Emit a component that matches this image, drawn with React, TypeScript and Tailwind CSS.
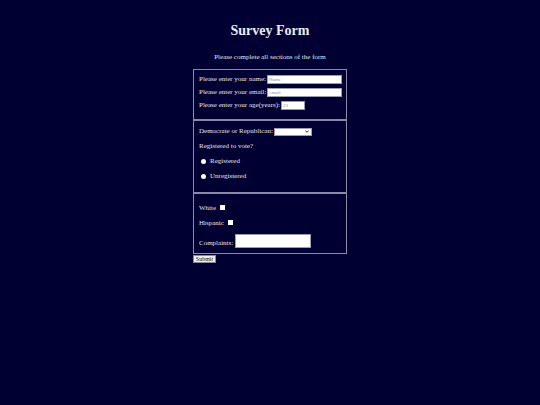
import React from 'react'

const serif = { fontFamily: '"Liberation Serif", "Times New Roman", serif' }

const Field = ({ placeholder, w }: { placeholder: string; w: string }) => (
  <input
    type="text"
    placeholder={placeholder}
    className={`${w} shrink-0 h-[9px] bg-white border border-[#9a9ab0] px-[1px] text-[5px] leading-none text-[#333] placeholder:text-[#8a8a8a] outline-none`}
  />
)

const Radio = ({ label }: { label: string }) => (
  <div className="h-[15px] flex items-center pl-[2px]">
    <span className="w-[5px] h-[5px] rounded-full bg-white mr-[4px]" />
    <span>{label}</span>
  </div>
)

const Check = ({ label }: { label: string }) => (
  <div className="h-[15px] flex items-center">
    <span>{label}</span>
    <span className="w-[5px] h-[5px] bg-white ml-[4px] -mt-[2px]" />
  </div>
)

export default function App() {
  return (
    <div className="w-[540px] h-[405px] bg-[#000033] text-[#e4e4ee] overflow-hidden whitespace-nowrap" style={serif}>
      <h1 className="pt-[22px] text-center text-[14px] font-bold leading-[18px] text-[#ececf4]">Survey Form</h1>
      <p className="mt-[12px] text-center text-[7px] leading-[10px]">Please complete all sections of the form</p>

      <form className="w-[154px] mx-auto mt-[7px] text-[7px] leading-none">
        {/* personal */}
        <div className="border border-[#8a8aa8] pt-[3px] pb-[7px] px-[5px]">
          <div className="h-[13px] flex items-center gap-[1px]">
            <span className="shrink-0">Please enter your name:</span>
            <Field placeholder="Name" w="w-[75px]" />
          </div>
          <div className="h-[13px] flex items-center gap-[1px]">
            <span className="shrink-0">Please enter your email:</span>
            <Field placeholder="email" w="w-[75px]" />
          </div>
          <div className="h-[13px] flex items-center gap-[1px]">
            <span className="shrink-0">Please enter your age(years):</span>
            <Field placeholder="13" w="w-[24px]" />
          </div>
        </div>

        {/* voting */}
        <div className="border border-[#8a8aa8] border-t-2 -mt-[1px] pt-[3px] pb-[8px] px-[5px]">
          <div className="h-[15px] flex items-center gap-[1px]">
            <span className="shrink-0">Democrate or Republican:</span>
            <div className="w-[38px] h-[8px] shrink-0 bg-white border border-[#9a9ab0] flex items-center justify-end pr-[2px]">
              <svg width="4" height="3" viewBox="0 0 4 3">
                <path d="M0.3 0.5 L2 2.4 L3.7 0.5" stroke="#222" strokeWidth="0.9" fill="none" />
              </svg>
            </div>
          </div>
          <div className="h-[15px] flex items-center">Registered to vote?</div>
          <Radio label="Registered" />
          <Radio label="Unregistered" />
        </div>

        {/* background */}
        <div className="border border-[#8a8aa8] border-t-2 -mt-[1px] pt-[7px] pb-[5px] px-[5px]">
          <Check label="White" />
          <Check label="Hispanic" />
          <div className="mt-[3px] flex items-end gap-[2px]">
            <span className="pb-[1px]">Complaints:</span>
            <textarea className="w-[76px] h-[14px] bg-white border border-[#9a9ab0] resize-none outline-none" />
          </div>
        </div>

        <button
          type="button"
          className="mt-[1px] w-[23px] h-[8px] bg-[#efefef] border border-[#8a8a8a] text-[6px] leading-none text-[#111] flex items-center justify-center"
        >
          Submit
        </button>
      </form>
    </div>
  )
}
